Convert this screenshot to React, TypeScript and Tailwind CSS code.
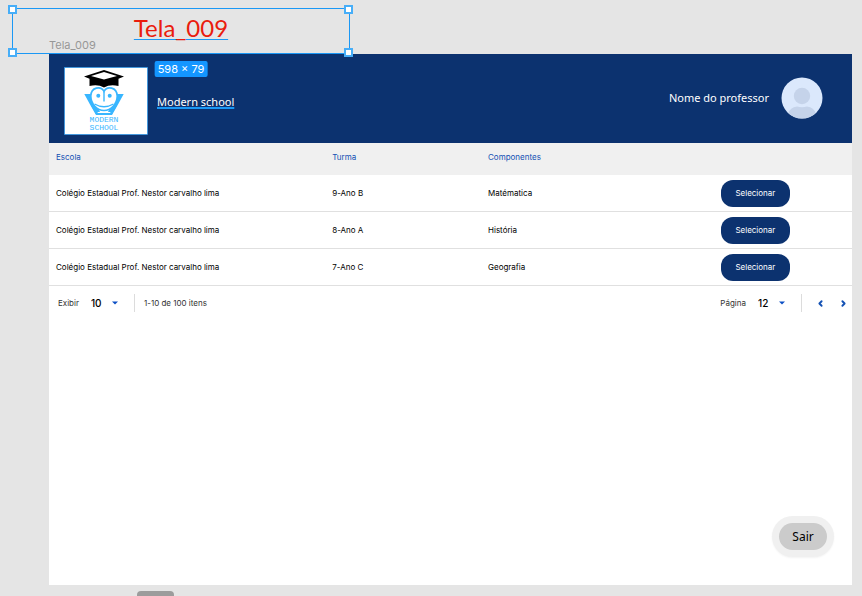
import { ChevronLeft, ChevronRight } from "lucide-react";

const rows = [
  { escola: "Colégio Estadual Prof. Nestor carvalho lima", turma: "9-Ano B", componente: "Matématica" },
  { escola: "Colégio Estadual Prof. Nestor carvalho lima", turma: "8-Ano A", componente: "História" },
  { escola: "Colégio Estadual Prof. Nestor carvalho lima", turma: "7-Ano C", componente: "Geografia" },
];

function Handle({ className }: { className: string }) {
  return <span className={`absolute size-[9px] border-2 border-[#47aef8] bg-white ${className}`} />;
}

function Selection() {
  return (
    <div className="absolute top-2 left-3 z-10 flex h-[46px] w-[338px] justify-center border border-[#1b98f5]">
      <h1 className="h-8 pt-1 font-[Lato,sans-serif] text-2xl leading-[30px] font-normal text-[#ea1c0d] underline decoration-[#1b98f5] decoration-1 underline-offset-2">
        Tela_009
      </h1>
      <Handle className="-top-1 -left-[5px]" />
      <Handle className="-top-1 -right-1" />
      <Handle className="-bottom-1 -left-[5px]" />
      <Handle className="-right-1 -bottom-1" />
      <span className="absolute top-full left-1/2 mt-2 -translate-x-1/2 rounded-xs bg-[#1496ff] px-[3px] font-[Inter,sans-serif] text-[11px] leading-4 whitespace-nowrap text-white">
        598 × 79
      </span>
    </div>
  );
}

function Logo() {
  return (
    <svg viewBox="0 0 84 68" className="h-[68px] w-[84px]" role="img" aria-label="Modern School">
      <rect x="0.5" y="0.5" width="83" height="67" fill="#fff" stroke="#1b98f5" strokeWidth="0.6" />
      <path d="M20 9.500 40 3 60 9.500 54.500 11.800V19Q46 17 40 20.500 34 17 25.500 19V11.800Z" fill="#000" />
      <path d="M27 9 40 5 53 9 40 12.500Z" fill="#fff" />
      <path d="M20.300 27H27.500L36 45H33.500V48H32L26 37.500Z M59.700 27H52.500L44 45H46.500V48H48L54 37.500Z" fill="#38b6ff" />
      <path d="M28 38 33 47H47L52 38" fill="none" stroke="#38b6ff" strokeWidth="2" />
      <path
        d="M40 24.500C37 18.500 27 20 26.800 29 27 37 33 43.500 40 43.500S53 37 53.200 29C53 20 43 18.500 40 24.500Z"
        fill="#fff"
        stroke="#38b6ff"
        strokeWidth="1.600"
      />
      <path d="M40 24.500V34.500" stroke="#38b6ff" strokeWidth="1.400" />
      <path d="M30.500 37Q40 42.500 49.500 37" fill="none" stroke="#38b6ff" strokeWidth="1.300" />
      <circle cx="34.300" cy="28.700" r="2" fill="#38b6ff" />
      <circle cx="45.700" cy="28.700" r="2" fill="#38b6ff" />
      <g fill="#38b6ff" fontFamily="'Liberation Mono', monospace" fontSize="8">
        <text x="40" y="55" textAnchor="middle">MODERN</text>
        <text x="40" y="63" textAnchor="middle">SCHOOL</text>
      </g>
    </svg>
  );
}

function Avatar() {
  return (
    <svg viewBox="0 0 42 42" className="size-[42px]" role="img" aria-label="Professor">
      <defs>
        <clipPath id="avatar-clip">
          <circle cx="21" cy="21" r="20.500" />
        </clipPath>
      </defs>
      <circle cx="21" cy="21" r="20.500" fill="#dbe8fc" />
      <g clipPath="url(#avatar-clip)" fill="#c5d3ea">
        <circle cx="21" cy="19" r="8.200" />
        <path d="M7 37Q9 30 16 29.500 21 31 26 29.500 33 30 35 37V42H7Z" />
      </g>
    </svg>
  );
}

function PageSelect({ id, label, value }: { id: string; label: string; value: string }) {
  return (
    <div className="flex items-center">
      <label htmlFor={id} className="text-[8px] text-[#333]">
        {label}
      </label>
      <div className="relative ml-3 flex items-center">
        <select id={id} defaultValue={value} className="w-[27px] appearance-none bg-transparent text-[10px] leading-4 font-medium text-black">
          <option>{value}</option>
        </select>
        <svg viewBox="0 0 6 4" className="pointer-events-none absolute right-0 h-1 w-1.5" aria-hidden="true">
          <path d="M0 0.500H6L3 3.500Z" fill="#0b4fc4" />
        </svg>
      </div>
    </div>
  );
}

export default function App() {
  return (
    <div className="relative flex min-h-screen flex-col bg-[#e5e5e5] pr-[10px] pl-[49px] font-['Noto_Sans',sans-serif]">
      <Selection />
      <div className="flex h-[54px] items-end pb-0.5 font-[Inter,sans-serif] text-[11px] leading-[14px] text-[#979797]">Tela_009</div>
      <main className="flex flex-1 flex-col bg-white">
        <header className="flex h-[89px] items-center bg-[#0c326f] pr-[29px] pb-px pl-[15px] text-white">
          <div className="pt-1.5">
            <Logo />
          </div>
          <span className="ml-[9px] pt-2 text-[11px] underline decoration-[#1b98f5] decoration-2 underline-offset-1">Modern school</span>
          <span className="mr-3 ml-auto text-[11px]">Nome do professor</span>
          <Avatar />
        </header>

        <table className="w-full table-fixed border-separate border-spacing-0 text-left font-[Inter,sans-serif] text-[8px] font-normal text-black">
          <colgroup>
            <col className="w-[34.4%]" />
            <col className="w-[19.4%]" />
            <col className="w-[29%]" />
            <col />
          </colgroup>
          <thead className="bg-[#f0f0f0] text-[#1351b4]">
            <tr className="h-8">
              <th className="px-[7px] pb-1 font-normal">Escola</th>
              <th className="px-[7px] pb-1 font-normal">Turma</th>
              <th className="px-[7px] pb-1 font-normal">Componentes</th>
              <th aria-label="Ações" />
            </tr>
          </thead>
          <tbody>
            {rows.map((row) => (
              <tr key={row.turma} className="h-[37px]">
                <td className="border-b border-[#e0e0e0] px-[7px]">{row.escola}</td>
                <td className="border-b border-[#e0e0e0] px-[7px]">{row.turma}</td>
                <td className="border-b border-[#e0e0e0] px-[7px]">{row.componente}</td>
                <td className="border-b border-[#e0e0e0] px-[7px]">
                  <button type="button" className="block h-[27px] w-[69px] rounded-xl bg-[#0c326f] text-[8px] text-white">
                    Selecionar
                  </button>
                </td>
              </tr>
            ))}
          </tbody>
        </table>

        <nav aria-label="Paginação" className="flex h-[34px] items-center pr-1 pl-[9px] font-[Inter,sans-serif]">
          <PageSelect id="exibir" label="Exibir" value="10" />
          <span className="ml-4 h-[18px] w-px bg-[#dcdcdc]" />
          <span className="ml-[9px] text-[8px] text-[#333]">1-10 de 100 itens</span>
          <div className="ml-auto flex items-center">
            <PageSelect id="pagina" label="Página" value="12" />
            <span className="ml-4 h-[18px] w-px bg-[#dcdcdc]" />
            <button type="button" aria-label="Anterior" className="ml-[14px] text-[#1351b4]">
              <ChevronLeft size={9} strokeWidth={5} />
            </button>
            <button type="button" aria-label="Próxima" className="ml-[14px] text-[#1351b4]">
              <ChevronRight size={9} strokeWidth={5} />
            </button>
          </div>
        </nav>

        <div className="mt-auto flex justify-end pr-[18px] pb-7">
          <div className="rounded-full bg-[#f0f0f0] p-[7px] shadow-xs">
            <button type="button" className="block h-[27px] w-12 rounded-full bg-[#cbcbcb] text-xs text-black">
              Sair
            </button>
          </div>
        </div>
      </main>
      <footer className="flex h-[11px] items-end pl-[88px]">
        <div className="h-[5px] w-[37px] rounded-t-sm bg-[#9c9c9c]" />
      </footer>
    </div>
  );
}
